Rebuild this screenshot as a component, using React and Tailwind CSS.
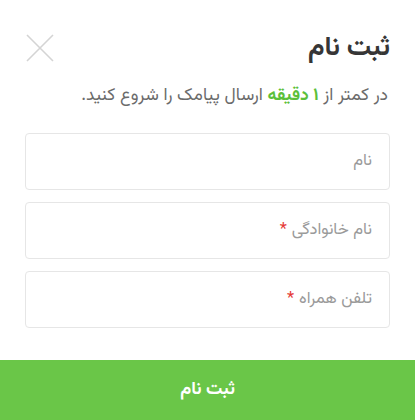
import React from "react";

export default function App() {
  return (
    <div
      dir="rtl"
      className="w-[415px] h-[420px] bg-white flex flex-col overflow-hidden font-['Vazirmatn','Noto_Sans_Arabic','DejaVu_Sans',sans-serif]"
    >
      <div className="px-[27px] pt-[31px] flex-1 flex flex-col">
        <div className="flex items-center justify-between h-[34px]">
          <h1 className="text-[27px] font-bold text-[#363636] leading-none mr-[-2px]">ثبت نام</h1>
          <svg width="28" height="28" viewBox="0 0 28 28" className="ml-[-1px]">
            <path d="M1 1 L27 27 M27 1 L1 27" stroke="#d4d4d4" strokeWidth="1.6" fill="none" />
          </svg>
        </div>
        <p className="mt-[22px] text-[17.5px] text-[#6b6b6b] leading-none">
          در کمتر از <span className="text-[#5cbf3a] font-bold">۱ دقیقه</span> ارسال پیامک را شروع کنید.
        </p>
        <div className="mt-[28px] flex flex-col gap-[12px] mr-[-2px] ml-[-2px]">
          {[
            { label: "نام", req: false },
            { label: "نام خانوادگی", req: true },
            { label: "تلفن همراه", req: true },
          ].map((f) => (
            <div
              key={f.label}
              className="h-[57px] border border-[#e6e6e6] rounded-[4px] flex items-center pr-[17px] text-[16.5px] text-[#9a9a9a]"
            >
              <span>{f.label}</span>
              {f.req && <span className="text-[#e53935] mr-[5px]">*</span>}
            </div>
          ))}
        </div>
      </div>
      <button className="h-[60px] w-full bg-[#6ac648] text-white text-[18px] font-bold">ثبت نام</button>
    </div>
  );
}
